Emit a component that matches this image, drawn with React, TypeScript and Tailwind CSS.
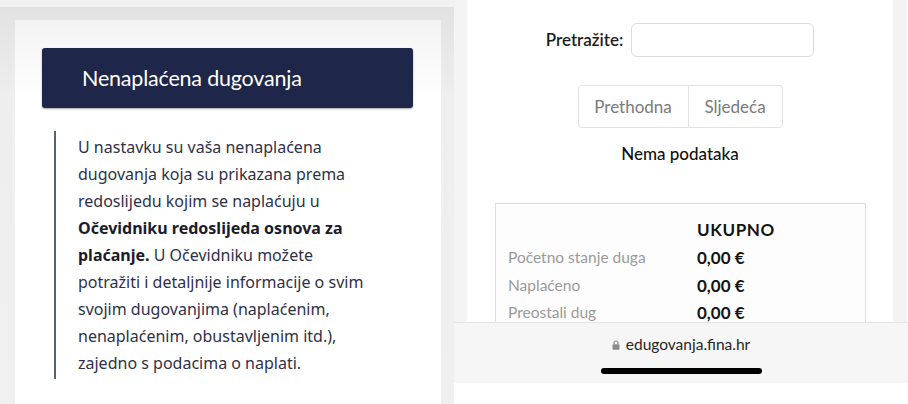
import React from "react";

const leftLines: React.ReactNode[] = [
  "U nastavku su vaša nenaplaćena",
  "dugovanja koja su prikazana prema",
  "redoslijedu kojim se naplaćuju u",
  <span className="font-bold text-[#1a1c2c]">Očevidniku redoslijeda osnova za</span>,
  <>
    <span className="font-bold text-[#1a1c2c]">plaćanje.</span> U Očevidniku možete
  </>,
  "potražiti i detaljnije informacije o svim",
  "svojim dugovanjima (naplaćenim,",
  "nenaplaćenim, obustavljenim itd.),",
  "zajedno s podacima o naplati.",
];

const rows = [
  ["Početno stanje duga", "0,00 €"],
  ["Naplaćeno", "0,00 €"],
  ["Preostali dug", "0,00 €"],
];

export default function App() {
  return (
    <div className="flex w-[908px] h-[404px] overflow-hidden bg-white font-['Lato','Noto_Sans',sans-serif]">
      {/* Left phone */}
      <div className="w-[454px] h-full flex flex-col bg-[#eeeeee]">
        <div className="h-[7px] shrink-0 bg-[#f1f1f1]" />
        <div className="flex-1 pl-[15px] pr-[13px] pt-[13px] bg-[linear-gradient(to_bottom,#e2e2e2_0px,#eeeeee_90px,#f0f0f0_100%)]">
          <div className="h-full pt-[28px] pl-[27px] pr-[28px] bg-[linear-gradient(to_bottom,#f3f3f3_0px,#ffffff_80px)]">
            <div className="h-[60px] rounded-[3px] bg-[#1e2649] shadow-[0_1px_2px_rgba(0,0,0,0.35)] flex items-center pl-[40px] text-white text-[21.5px] tracking-[-0.2px]">
              Nenaplaćena dugovanja
            </div>
            <div className="mt-[23px] ml-[12px] border-l-2 border-[#5b5f78] pl-[22px] pt-[3px] pb-[2px] font-['Noto_Sans',sans-serif] text-[16px] leading-[27px] text-[#2e3148] whitespace-nowrap">
              {leftLines.map((l, i) => (
                <div key={i}>{l}</div>
              ))}
            </div>
          </div>
        </div>
      </div>

      {/* Right phone */}
      <div className="w-[454px] h-full flex flex-col bg-white">
        <div className="h-[322px] shrink-0 flex overflow-hidden">
          <div className="w-[13px] bg-[#f4f4f4]" />
          <div className="w-[426px] flex flex-col items-center bg-white">
            <div className="shrink-0 mt-[23px] flex items-center gap-[8px]">
              <span className="text-[17px] font-semibold text-[#1c1c1c]">Pretražite:</span>
              <div className="w-[183px] h-[34px] rounded-[6px] border border-[#dcdcdc] bg-white" />
            </div>
            <div className="shrink-0 mt-[28px] flex h-[43px] rounded-[4px] border border-[#e2e2e2] text-[17px] text-[#7a7a7a]">
              <div className="w-[110px] flex items-center justify-center border-r border-[#e2e2e2]">Prethodna</div>
              <div className="w-[93px] flex items-center justify-center">Sljedeća</div>
            </div>
            <div className="shrink-0 mt-[14px] h-[24px] leading-[24px] text-[17px] font-medium text-[#111111]">Nema podataka</div>
            <div className="shrink-0 mt-[37px] self-start ml-[28px] w-[371px] border border-[#dedede] bg-[#fdfdfd] pt-[11px] pl-[12px] h-[160px]">
              <div className="flex h-[29px] items-center">
                <div className="w-[189px]" />
                <div className="text-[17px] font-bold tracking-[0.6px] text-[#141414]">UKUPNO</div>
              </div>
              {rows.map(([k, v]) => (
                <div key={k} className="flex h-[27.5px] items-center">
                  <div className="w-[189px] text-[15.5px] text-[#9a9a9a]">{k}</div>
                  <div className="text-[17px] font-bold text-[#141414]">{v}</div>
                </div>
              ))}
            </div>
          </div>
          <div className="w-[14px] bg-[#f3f3f3]" />
          <div className="w-[1px] bg-white" />
        </div>
        <div className="h-[61px] shrink-0 border-t border-[#e4e4e4] bg-[#f6f6f6] flex flex-col items-center">
          <div className="mt-[10px] flex items-center gap-[6px] text-[15.5px] text-[#262626]">
            <svg width="8" height="10" viewBox="0 0 8 10" className="text-[#8a8a8a]">
              <path d="M2 4.5V3a2 2 0 0 1 4 0v1.5" fill="none" stroke="currentColor" strokeWidth="1.2" />
              <rect x="0.5" y="4.3" width="7" height="5.4" rx="1" fill="currentColor" />
            </svg>
            <span>edugovanja.fina.hr</span>
          </div>
          <div className="mt-[12px] w-[161px] h-[6px] rounded-full bg-black" />
        </div>
        <div className="flex-1 bg-white" />
      </div>
    </div>
  );
}
